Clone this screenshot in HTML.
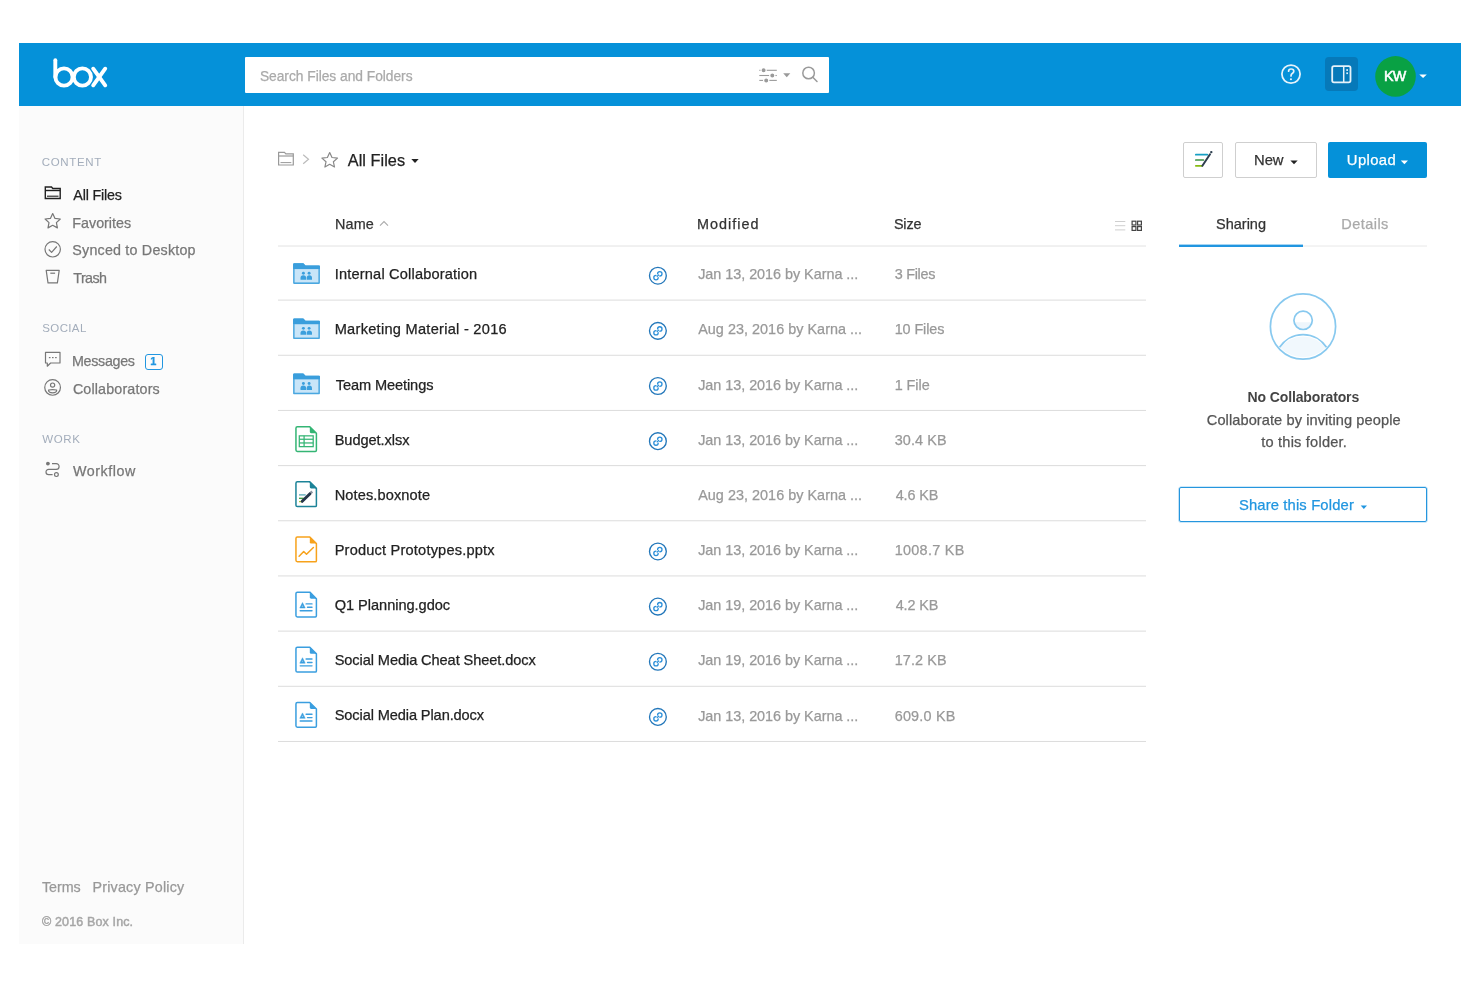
<!DOCTYPE html>
<html><head><meta charset="utf-8"><title>Box - All Files</title><style>
html,body{margin:0;padding:0;}
body{width:1480px;height:987px;position:relative;overflow:hidden;background:#fff;font-family:"Liberation Sans",sans-serif;}
.t{position:absolute;white-space:nowrap;-webkit-text-stroke:0.25px currentColor;}
.b{position:absolute;box-sizing:content-box;}
</style></head><body><div style="position:absolute;left:0;top:0;width:1480px;height:987px;filter:blur(0.35px);">
<div class="b" style="left:19px;top:106px;width:1442px;height:838px;background:#fff;"></div>
<div class="b" style="left:19px;top:43px;width:1442px;height:63px;background:#0591d9;"></div>
<div class="b" style="left:19px;top:106px;width:224px;height:838px;background:#fbfbfb;border-right:1px solid #ebebeb;"></div>
<div class="b" style="left:245px;top:57px;width:584px;height:36px;background:#fff;border-radius:1px;"></div>
<div class="b" style="left:1325px;top:57px;width:33px;height:34px;background:#0679b9;border-radius:4px;"></div>
<div class="b" style="left:1183px;top:142px;width:38px;height:34px;border:1px solid #cfcfcf;border-radius:2px;background:#fff;"></div>
<div class="b" style="left:1235px;top:142px;width:80px;height:34px;border:1px solid #cfcfcf;border-radius:2px;background:#fff;"></div>
<div class="b" style="left:1328px;top:142px;width:99px;height:36px;background:#0591d9;border-radius:2px;"></div>
<div class="b" style="left:1179px;top:487px;width:246px;height:33px;border:1px solid #2596de;border-radius:2px;box-shadow:0 0 0 0.6px rgba(37,150,222,0.45);"></div>
<div class="b" style="left:145px;top:353.5px;width:15.5px;height:14.5px;border:1.4px solid #2196e0;border-radius:3px;"></div>
<svg class="b" style="left:0;top:0" width="1480" height="987"><g fill="none" stroke="#fff" stroke-width="3.9" stroke-linecap="round">
<line x1="55.3" y1="60.2" x2="55.3" y2="77"/>
<circle cx="64" cy="77" r="8.6"/>
<circle cx="82.4" cy="77" r="8.6"/>
<line x1="93.2" y1="68.7" x2="105.2" y2="85.3"/>
<line x1="105.2" y1="68.7" x2="93.2" y2="85.3"/>
</g>
<g stroke="#9a9a9a" stroke-width="1.1" fill="none">
<line x1="759.3" y1="70.3" x2="776.8" y2="70.3"/><line x1="759.3" y1="75.5" x2="776.8" y2="75.5"/><line x1="759.3" y1="80.4" x2="776.8" y2="80.4"/>
</g>
<g fill="#9a9a9a" stroke="#fff" stroke-width="1.2"><circle cx="763.6" cy="70.3" r="2.6"/><circle cx="772.3" cy="75.5" r="2.6"/><circle cx="766.2" cy="80.4" r="2.6"/></g><g fill="#9a9a9a">
<path d="M783.2 73.3 L790.3 73.3 L786.75 77.2 Z"/></g>
<g fill="none" stroke="#9a9a9a" stroke-width="1.5"><circle cx="808.6" cy="73" r="5.8"/><line x1="812.8" y1="77.3" x2="817" y2="81.5" stroke-linecap="round"/></g>
<circle cx="1291" cy="74.1" r="9.1" fill="none" stroke="#e6f3fb" stroke-width="1.75"/>
<path d="M1288.6 71.2 Q1288.6 69 1291.1 69 Q1293.8 69 1293.8 71.2 Q1293.8 72.7 1292.2 73.5 Q1291 74.2 1291 75.9" fill="none" stroke="#e6f3fb" stroke-width="1.7" stroke-linecap="round"/>
<circle cx="1290.95" cy="79.2" r="1.05" fill="#e6f3fb"/>
<rect x="1332.2" y="66.2" width="18.3" height="16.1" rx="1.8" fill="none" stroke="#e6f2fa" stroke-width="1.8"/>
<line x1="1343.7" y1="66" x2="1343.7" y2="82.5" stroke="#e6f2fa" stroke-width="1.5"/>
<rect x="1346.3" y="69.2" width="1.7" height="1.7" fill="#e6f2fa"/><rect x="1346.3" y="72.4" width="1.7" height="1.7" fill="#e6f2fa"/>
<circle cx="1395.5" cy="76.4" r="20.3" fill="#09a144"/>
<path d="M1419.3 74.4 L1426.8 74.4 L1423.05 78.1 Z" fill="#fff"/>
<g fill="none" stroke="#222" stroke-width="1.4">
<path d="M45.3 187 H51.5 L52.8 188.5 H60.2 V198.5 H45.3 Z"/><line x1="45.3" y1="190.5" x2="60.2" y2="190.5"/><line x1="47" y1="196.2" x2="58.5" y2="196.2" stroke-width="1.1"/>
</g>
<g fill="none" stroke="#777" stroke-width="1.2" stroke-linejoin="round">
<path d="M52.7 213.5 L55 218.4 L60.3 219 L56.4 222.6 L57.4 227.9 L52.7 225.3 L48 227.9 L49 222.6 L45.1 219 L50.4 218.4 Z"/>
<circle cx="52.7" cy="249.3" r="7.7"/><path d="M48.8 249.5 L51.6 252.3 L56.8 246.5"/>
<path d="M46.2 270.3 H59.2 L57.4 282.9 H48 Z"/><line x1="50.3" y1="273.2" x2="55.1" y2="273.2"/>
<path d="M45.5 352.3 H60 V363 H50.6 L47.3 366.2 V363 H45.5 Z"/>
<circle cx="52.6" cy="387.4" r="7.85"/><circle cx="52.6" cy="385.1" r="2.1"/><path d="M48.5 390 Q52.6 389.2 56.7 390 Q56.7 392.8 52.6 392.8 Q48.5 392.8 48.5 390 Z"/>
<circle cx="56.4" cy="474.6" r="1.9"/><path d="M52 463.6 H56.2 A2.9 2.9 0 0 1 56.2 469.4 H48.6 A2.6 2.6 0 0 0 48.6 474.6 H52.6"/>
</g>
<circle cx="47.9" cy="463.6" r="1.9" fill="#777"/>
<g fill="#777"><rect x="48.9" y="357" width="1.6" height="1.2"/><rect x="52" y="357" width="1.6" height="1.2"/><rect x="55.1" y="357" width="1.6" height="1.2"/></g>
<g fill="none" stroke="#999" stroke-width="1.2">
<path d="M278.6 152.4 H284.5 L285.8 153.8 H293.3 V165 H278.6 Z"/><line x1="278.6" y1="156" x2="293.3" y2="156"/><line x1="280.5" y1="162.6" x2="291.3" y2="162.6" stroke-width="1"/>
</g>
<path d="M303.2 154.8 L308.5 159.3 L303.2 163.8" fill="none" stroke="#bbb" stroke-width="1.2"/>
<path d="M329.7 152.5 L332 157.5 L337.5 158.1 L333.4 161.8 L334.5 167 L329.7 164.3 L324.9 167 L326 161.8 L321.9 158.1 L327.4 157.5 Z" fill="none" stroke="#888" stroke-width="1.2" stroke-linejoin="round"/>
<path d="M411.3 159 L418.7 159 L415 163 Z" fill="#222"/>
<path d="M1290.4 160.5 L1297.7 160.5 L1294 164.3 Z" fill="#222"/>
<path d="M1400.8 160.5 L1408 160.5 L1404.4 164.3 Z" fill="#fff"/>
<line x1="1195.8" y1="154.7" x2="1207.3" y2="154.7" stroke="#16a0c4" stroke-width="1.7" stroke-linecap="round"/>
<line x1="1195.8" y1="160" x2="1203.4" y2="160" stroke="#3d9142" stroke-width="1.7" stroke-linecap="round"/>
<line x1="1195.8" y1="165.8" x2="1202" y2="165.8" stroke="#86bc12" stroke-width="1.7" stroke-linecap="round"/>
<line x1="1202.4" y1="165.8" x2="1210" y2="154.3" stroke="#2d3e4e" stroke-width="2" stroke-linecap="round"/>
<circle cx="1211.3" cy="152.1" r="1.2" fill="#2d3e4e"/>
<path d="M380 225.7 L384 221.6 L388 225.7" fill="none" stroke="#aaa" stroke-width="1.1"/>
<g stroke="#cfcfcf" stroke-width="1"><line x1="1115" y1="221.5" x2="1125.3" y2="221.5"/><line x1="1115" y1="225.7" x2="1125.3" y2="225.7"/><line x1="1115" y1="229.9" x2="1125.3" y2="229.9"/></g>
<g fill="none" stroke="#444" stroke-width="1.2"><rect x="1132.1" y="221.2" width="3.8" height="3.8"/><rect x="1137.6" y="221.2" width="3.8" height="3.8"/><rect x="1132.1" y="226.6" width="3.8" height="3.8"/><rect x="1137.6" y="226.6" width="3.8" height="3.8"/></g>
<line x1="278" y1="246" x2="1146" y2="246" stroke="#e2e2e2" stroke-width="1"/>
<line x1="278" y1="300.10" x2="1146" y2="300.10" stroke="#dcdcdc" stroke-width="1"/>
<g transform="translate(292.3,263.30)">
<path d="M0.8 1.2 Q0.8 0 2 0 H11 L13.2 2.2 H26.8 Q27.6 2.2 27.6 3 V19.8 Q27.6 20.6 26.8 20.6 H1.6 Q0.8 20.6 0.8 19.8 Z" fill="#4aa7e0"/>
<path d="M0.8 1.2 Q0.8 0 2 0 H11 L13.2 2.2 H26.8 Q27.6 2.2 27.6 3 V5.6 H0.8 Z" fill="#3a9edc"/>
<rect x="2.3" y="5.8" width="23.8" height="13.3" fill="#c9e5f8"/>
<circle cx="11.1" cy="9.9" r="1.45" fill="#3b9fdd"/><circle cx="16.8" cy="9.9" r="1.45" fill="#3b9fdd"/>
<path d="M8.2 16.4 V14.6 Q8.2 12 11 12 Q13.8 12 13.8 14.6 V16.4 Z" fill="#3b9fdd"/><path d="M14.4 16.4 V14.6 Q14.4 12 17 12 Q19.7 12 19.7 14.6 V16.4 Z" fill="#3b9fdd"/>
</g>
<g transform="translate(657.9,275.70)"><circle r="8.4" fill="none" stroke="#2377ba" stroke-width="1.35"/><g fill="none" stroke="#2b8fd9" stroke-width="1.3" stroke-linecap="round"><path d="M-0.3 -1.9 A2.2 2.2 0 1 1 1.9 0.3"/><path d="M0.3 1.9 A2.2 2.2 0 1 1 -1.9 -0.3"/><line x1="-0.7" y1="0.7" x2="0.7" y2="-0.7"/></g></g>
<line x1="278" y1="355.27" x2="1146" y2="355.27" stroke="#dcdcdc" stroke-width="1"/>
<g transform="translate(292.3,318.45)">
<path d="M0.8 1.2 Q0.8 0 2 0 H11 L13.2 2.2 H26.8 Q27.6 2.2 27.6 3 V19.8 Q27.6 20.6 26.8 20.6 H1.6 Q0.8 20.6 0.8 19.8 Z" fill="#4aa7e0"/>
<path d="M0.8 1.2 Q0.8 0 2 0 H11 L13.2 2.2 H26.8 Q27.6 2.2 27.6 3 V5.6 H0.8 Z" fill="#3a9edc"/>
<rect x="2.3" y="5.8" width="23.8" height="13.3" fill="#c9e5f8"/>
<circle cx="11.1" cy="9.9" r="1.45" fill="#3b9fdd"/><circle cx="16.8" cy="9.9" r="1.45" fill="#3b9fdd"/>
<path d="M8.2 16.4 V14.6 Q8.2 12 11 12 Q13.8 12 13.8 14.6 V16.4 Z" fill="#3b9fdd"/><path d="M14.4 16.4 V14.6 Q14.4 12 17 12 Q19.7 12 19.7 14.6 V16.4 Z" fill="#3b9fdd"/>
</g>
<g transform="translate(657.9,330.85)"><circle r="8.4" fill="none" stroke="#2377ba" stroke-width="1.35"/><g fill="none" stroke="#2b8fd9" stroke-width="1.3" stroke-linecap="round"><path d="M-0.3 -1.9 A2.2 2.2 0 1 1 1.9 0.3"/><path d="M0.3 1.9 A2.2 2.2 0 1 1 -1.9 -0.3"/><line x1="-0.7" y1="0.7" x2="0.7" y2="-0.7"/></g></g>
<line x1="278" y1="410.44" x2="1146" y2="410.44" stroke="#dcdcdc" stroke-width="1"/>
<g transform="translate(292.3,373.60)">
<path d="M0.8 1.2 Q0.8 0 2 0 H11 L13.2 2.2 H26.8 Q27.6 2.2 27.6 3 V19.8 Q27.6 20.6 26.8 20.6 H1.6 Q0.8 20.6 0.8 19.8 Z" fill="#4aa7e0"/>
<path d="M0.8 1.2 Q0.8 0 2 0 H11 L13.2 2.2 H26.8 Q27.6 2.2 27.6 3 V5.6 H0.8 Z" fill="#3a9edc"/>
<rect x="2.3" y="5.8" width="23.8" height="13.3" fill="#c9e5f8"/>
<circle cx="11.1" cy="9.9" r="1.45" fill="#3b9fdd"/><circle cx="16.8" cy="9.9" r="1.45" fill="#3b9fdd"/>
<path d="M8.2 16.4 V14.6 Q8.2 12 11 12 Q13.8 12 13.8 14.6 V16.4 Z" fill="#3b9fdd"/><path d="M14.4 16.4 V14.6 Q14.4 12 17 12 Q19.7 12 19.7 14.6 V16.4 Z" fill="#3b9fdd"/>
</g>
<g transform="translate(657.9,386.00)"><circle r="8.4" fill="none" stroke="#2377ba" stroke-width="1.35"/><g fill="none" stroke="#2b8fd9" stroke-width="1.3" stroke-linecap="round"><path d="M-0.3 -1.9 A2.2 2.2 0 1 1 1.9 0.3"/><path d="M0.3 1.9 A2.2 2.2 0 1 1 -1.9 -0.3"/><line x1="-0.7" y1="0.7" x2="0.7" y2="-0.7"/></g></g>
<line x1="278" y1="465.61" x2="1146" y2="465.61" stroke="#dcdcdc" stroke-width="1"/>
<g transform="translate(295.2,425.95)"><path d="M0.75 2.2 Q0.75 0.75 2.2 0.75 H14.6 L21.2 7.3 V24.4 Q21.2 25.5 20.1 25.5 H2.2 Q0.75 25.5 0.75 24.1 Z" fill="#fff" stroke="#34b574" stroke-width="1.5" stroke-linejoin="round"/><path d="M14.6 0.75 L21.2 7.3 H16 Q14.6 7.3 14.6 5.9 Z" fill="#34b574"/><g fill="none" stroke="#34b574" stroke-width="1.25"><rect x="4.1" y="9.9" width="13.9" height="10.8"/><line x1="4.1" y1="13.3" x2="18" y2="13.3"/><line x1="4.1" y1="17" x2="18" y2="17"/><line x1="8.9" y1="9.9" x2="8.9" y2="20.7"/></g></g>
<g transform="translate(657.9,441.15)"><circle r="8.4" fill="none" stroke="#2377ba" stroke-width="1.35"/><g fill="none" stroke="#2b8fd9" stroke-width="1.3" stroke-linecap="round"><path d="M-0.3 -1.9 A2.2 2.2 0 1 1 1.9 0.3"/><path d="M0.3 1.9 A2.2 2.2 0 1 1 -1.9 -0.3"/><line x1="-0.7" y1="0.7" x2="0.7" y2="-0.7"/></g></g>
<line x1="278" y1="520.78" x2="1146" y2="520.78" stroke="#dcdcdc" stroke-width="1"/>
<g transform="translate(295.2,481.10)"><path d="M0.75 2.2 Q0.75 0.75 2.2 0.75 H14.6 L21.2 7.3 V24.4 Q21.2 25.5 20.1 25.5 H2.2 Q0.75 25.5 0.75 24.1 Z" fill="#fff" stroke="#1c8398" stroke-width="1.5" stroke-linejoin="round"/><path d="M14.6 0.75 L21.2 7.3 H16 Q14.6 7.3 14.6 5.9 Z" fill="#1c8398"/><line x1="3.8" y1="13.8" x2="10.5" y2="13.8" stroke="#5aa9b8" stroke-width="1.3"/><line x1="3.8" y1="17.2" x2="8.5" y2="17.2" stroke="#3c9a3c" stroke-width="1.3"/><line x1="3.8" y1="20.5" x2="6.5" y2="20.5" stroke="#a9c93c" stroke-width="1.3"/><line x1="7" y1="20.2" x2="14.8" y2="12.6" stroke="#26364a" stroke-width="3" stroke-linecap="round"/><line x1="15.6" y1="11.8" x2="17" y2="10.4" stroke="#8a93a0" stroke-width="2.6"/></g>
<line x1="278" y1="575.95" x2="1146" y2="575.95" stroke="#dcdcdc" stroke-width="1"/>
<g transform="translate(295.2,536.25)"><path d="M0.75 2.2 Q0.75 0.75 2.2 0.75 H14.6 L21.2 7.3 V24.4 Q21.2 25.5 20.1 25.5 H2.2 Q0.75 25.5 0.75 24.1 Z" fill="#fff" stroke="#f7a21b" stroke-width="1.5" stroke-linejoin="round"/><path d="M14.6 0.75 L21.2 7.3 H16 Q14.6 7.3 14.6 5.9 Z" fill="#f7a21b"/><path d="M3.9 19.9 L8.5 15.2 L11.3 18 L18.2 11.3" fill="none" stroke="#f7a21b" stroke-width="1.5" stroke-linecap="round" stroke-linejoin="round"/></g>
<g transform="translate(657.9,551.45)"><circle r="8.4" fill="none" stroke="#2377ba" stroke-width="1.35"/><g fill="none" stroke="#2b8fd9" stroke-width="1.3" stroke-linecap="round"><path d="M-0.3 -1.9 A2.2 2.2 0 1 1 1.9 0.3"/><path d="M0.3 1.9 A2.2 2.2 0 1 1 -1.9 -0.3"/><line x1="-0.7" y1="0.7" x2="0.7" y2="-0.7"/></g></g>
<line x1="278" y1="631.12" x2="1146" y2="631.12" stroke="#dcdcdc" stroke-width="1"/>
<g transform="translate(295.2,591.40)"><path d="M0.75 2.2 Q0.75 0.75 2.2 0.75 H14.6 L21.2 7.3 V24.4 Q21.2 25.5 20.1 25.5 H2.2 Q0.75 25.5 0.75 24.1 Z" fill="#fff" stroke="#3a9edf" stroke-width="1.5" stroke-linejoin="round"/><path d="M14.6 0.75 L21.2 7.3 H16 Q14.6 7.3 14.6 5.9 Z" fill="#3a9edf"/><path d="M4.6 16.6 L7.3 11.2 L10 16.6 Z M6.5 15.3 H8.1 L7.3 13.6 Z" fill="#3a9edf" fill-rule="evenodd" stroke="#3a9edf" stroke-width="0.5" stroke-linejoin="round"/><g stroke="#3a9edf" stroke-width="1.4" stroke-linecap="round"><line x1="10.9" y1="12.5" x2="16.8" y2="12.5"/><line x1="12.3" y1="15.9" x2="16.8" y2="15.9"/><line x1="5" y1="19.3" x2="16.8" y2="19.3"/></g></g>
<g transform="translate(657.9,606.60)"><circle r="8.4" fill="none" stroke="#2377ba" stroke-width="1.35"/><g fill="none" stroke="#2b8fd9" stroke-width="1.3" stroke-linecap="round"><path d="M-0.3 -1.9 A2.2 2.2 0 1 1 1.9 0.3"/><path d="M0.3 1.9 A2.2 2.2 0 1 1 -1.9 -0.3"/><line x1="-0.7" y1="0.7" x2="0.7" y2="-0.7"/></g></g>
<line x1="278" y1="686.29" x2="1146" y2="686.29" stroke="#dcdcdc" stroke-width="1"/>
<g transform="translate(295.2,646.55)"><path d="M0.75 2.2 Q0.75 0.75 2.2 0.75 H14.6 L21.2 7.3 V24.4 Q21.2 25.5 20.1 25.5 H2.2 Q0.75 25.5 0.75 24.1 Z" fill="#fff" stroke="#3a9edf" stroke-width="1.5" stroke-linejoin="round"/><path d="M14.6 0.75 L21.2 7.3 H16 Q14.6 7.3 14.6 5.9 Z" fill="#3a9edf"/><path d="M4.6 16.6 L7.3 11.2 L10 16.6 Z M6.5 15.3 H8.1 L7.3 13.6 Z" fill="#3a9edf" fill-rule="evenodd" stroke="#3a9edf" stroke-width="0.5" stroke-linejoin="round"/><g stroke="#3a9edf" stroke-width="1.4" stroke-linecap="round"><line x1="10.9" y1="12.5" x2="16.8" y2="12.5"/><line x1="12.3" y1="15.9" x2="16.8" y2="15.9"/><line x1="5" y1="19.3" x2="16.8" y2="19.3"/></g></g>
<g transform="translate(657.9,661.75)"><circle r="8.4" fill="none" stroke="#2377ba" stroke-width="1.35"/><g fill="none" stroke="#2b8fd9" stroke-width="1.3" stroke-linecap="round"><path d="M-0.3 -1.9 A2.2 2.2 0 1 1 1.9 0.3"/><path d="M0.3 1.9 A2.2 2.2 0 1 1 -1.9 -0.3"/><line x1="-0.7" y1="0.7" x2="0.7" y2="-0.7"/></g></g>
<line x1="278" y1="741.46" x2="1146" y2="741.46" stroke="#dcdcdc" stroke-width="1"/>
<g transform="translate(295.2,701.70)"><path d="M0.75 2.2 Q0.75 0.75 2.2 0.75 H14.6 L21.2 7.3 V24.4 Q21.2 25.5 20.1 25.5 H2.2 Q0.75 25.5 0.75 24.1 Z" fill="#fff" stroke="#3a9edf" stroke-width="1.5" stroke-linejoin="round"/><path d="M14.6 0.75 L21.2 7.3 H16 Q14.6 7.3 14.6 5.9 Z" fill="#3a9edf"/><path d="M4.6 16.6 L7.3 11.2 L10 16.6 Z M6.5 15.3 H8.1 L7.3 13.6 Z" fill="#3a9edf" fill-rule="evenodd" stroke="#3a9edf" stroke-width="0.5" stroke-linejoin="round"/><g stroke="#3a9edf" stroke-width="1.4" stroke-linecap="round"><line x1="10.9" y1="12.5" x2="16.8" y2="12.5"/><line x1="12.3" y1="15.9" x2="16.8" y2="15.9"/><line x1="5" y1="19.3" x2="16.8" y2="19.3"/></g></g>
<g transform="translate(657.9,716.90)"><circle r="8.4" fill="none" stroke="#2377ba" stroke-width="1.35"/><g fill="none" stroke="#2b8fd9" stroke-width="1.3" stroke-linecap="round"><path d="M-0.3 -1.9 A2.2 2.2 0 1 1 1.9 0.3"/><path d="M0.3 1.9 A2.2 2.2 0 1 1 -1.9 -0.3"/><line x1="-0.7" y1="0.7" x2="0.7" y2="-0.7"/></g></g>
<line x1="1179" y1="246" x2="1427" y2="246" stroke="#e8e8e8" stroke-width="1"/>
<rect x="1179" y="244.6" width="124" height="2.4" fill="#2196e0"/>
<circle cx="1303" cy="326.5" r="32.6" fill="none" stroke="#88c9ef" stroke-width="1.7"/>
<path d="M1280.5 347.8 A28 28 0 0 1 1325.5 347.8 A31.5 31.5 0 0 1 1280.5 347.8 Z" fill="#f1f8fd"/>
<path d="M1279.6 347.3 A28 28 0 0 1 1326.5 347.3" fill="none" stroke="#88c9ef" stroke-width="1.7"/>
<path d="M1294.3 322.3 A9.2 9.2 0 0 0 1311.9 322.3 Z" fill="#eef6fc"/>
<circle cx="1303.1" cy="320.3" r="9.2" fill="none" stroke="#88c9ef" stroke-width="1.7"/>
<path d="M1360.7 505.5 L1367 505.5 L1363.85 509 Z" fill="#2196e0"/></svg>
<div class="t" style="left:259.90px;top:67.52px;font-size:13.8px;line-height:17px;letter-spacing:-0.03px;color:#aaa;">Search Files and Folders</div>
<div class="t" style="left:1384.10px;top:67.05px;font-size:14.3px;line-height:18px;letter-spacing:-0.80px;color:#fff;-webkit-text-stroke:0.55px currentColor;">KW</div>
<div class="t" style="left:41.70px;top:154.62px;font-size:11.5px;line-height:14px;letter-spacing:0.67px;color:#a3adbb;-webkit-text-stroke:0;">CONTENT</div>
<div class="t" style="left:73.30px;top:185.65px;font-size:14.3px;line-height:18px;letter-spacing:-0.17px;color:#222;">All Files</div>
<div class="t" style="left:72.30px;top:213.55px;font-size:14.3px;line-height:18px;letter-spacing:0.00px;color:#777;">Favorites</div>
<div class="t" style="left:72.30px;top:241.45px;font-size:14.3px;line-height:18px;letter-spacing:0.20px;color:#777;">Synced to Desktop</div>
<div class="t" style="left:73.30px;top:269.45px;font-size:14.3px;line-height:18px;letter-spacing:-0.60px;color:#777;">Trash</div>
<div class="t" style="left:42.30px;top:321.42px;font-size:11.5px;line-height:14px;letter-spacing:0.36px;color:#a3adbb;-webkit-text-stroke:0;">SOCIAL</div>
<div class="t" style="left:71.90px;top:351.85px;font-size:14.3px;line-height:18px;letter-spacing:-0.29px;color:#777;">Messages</div>
<div class="t" style="left:72.90px;top:380.25px;font-size:14.3px;line-height:18px;letter-spacing:0.15px;color:#777;">Collaborators</div>
<div class="t" style="left:42.30px;top:431.82px;font-size:11.5px;line-height:14px;letter-spacing:0.60px;color:#a3adbb;-webkit-text-stroke:0;">WORK</div>
<div class="t" style="left:72.90px;top:462.35px;font-size:14.3px;line-height:18px;letter-spacing:0.57px;color:#777;">Workflow</div>
<div class="t" style="left:42.00px;top:878.35px;font-size:14.3px;line-height:18px;letter-spacing:-0.05px;color:#999;">Terms</div>
<div class="t" style="left:92.40px;top:878.35px;font-size:14.3px;line-height:18px;letter-spacing:0.22px;color:#999;">Privacy Policy</div>
<div class="t" style="left:42.00px;top:913.87px;font-size:12.5px;line-height:16px;letter-spacing:0.14px;color:#a6a6a6;-webkit-text-stroke:0.45px currentColor;">© 2016 Box Inc.</div>
<div class="t" style="left:347.80px;top:149.65px;font-size:16.3px;line-height:20px;letter-spacing:0.03px;color:#222;">All Files</div>
<div class="t" style="left:1254.10px;top:151.47px;font-size:14.8px;line-height:18px;letter-spacing:-0.10px;color:#333;">New</div>
<div class="t" style="left:1346.80px;top:151.47px;font-size:14.8px;line-height:18px;letter-spacing:0.40px;color:#fff;">Upload</div>
<div class="t" style="left:335.10px;top:214.61px;font-size:14.4px;line-height:18px;letter-spacing:0.07px;color:#333;">Name</div>
<div class="t" style="left:697.00px;top:214.61px;font-size:14.4px;line-height:18px;letter-spacing:1.03px;color:#333;">Modified</div>
<div class="t" style="left:893.90px;top:214.61px;font-size:14.4px;line-height:18px;letter-spacing:-0.13px;color:#333;">Size</div>
<div class="t" style="left:1216.00px;top:214.68px;font-size:14.5px;line-height:18px;letter-spacing:0.00px;color:#333;">Sharing</div>
<div class="t" style="left:1341.20px;top:214.68px;font-size:14.5px;line-height:18px;letter-spacing:0.47px;color:#aaa;">Details</div>
<div class="t" style="left:1247.60px;top:387.95px;font-size:14.0px;line-height:18px;font-weight:bold;-webkit-text-stroke:0;letter-spacing:-0.13px;color:#444;">No Collaborators</div>
<div class="t" style="left:1206.80px;top:410.54px;font-size:14.6px;line-height:18px;letter-spacing:0.08px;color:#555;">Collaborate by inviting people</div>
<div class="t" style="left:1261.20px;top:432.84px;font-size:14.6px;line-height:18px;letter-spacing:0.21px;color:#555;">to this folder.</div>
<div class="t" style="left:1238.90px;top:495.57px;font-size:14.8px;line-height:18px;letter-spacing:0.14px;color:#2196e0;">Share this Folder</div>
<div class="t" style="left:334.70px;top:265.24px;font-size:14.6px;line-height:18px;letter-spacing:0.18px;color:#222;">Internal Collaboration</div>
<div class="t" style="left:698.20px;top:265.31px;font-size:14.4px;line-height:18px;letter-spacing:-0.03px;color:#999;">Jan 13, 2016 by Karna ...</div>
<div class="t" style="left:894.70px;top:265.31px;font-size:14.4px;line-height:18px;letter-spacing:-0.27px;color:#999;">3 Files</div>
<div class="t" style="left:334.70px;top:320.39px;font-size:14.6px;line-height:18px;letter-spacing:0.27px;color:#222;">Marketing Material - 2016</div>
<div class="t" style="left:698.20px;top:320.46px;font-size:14.4px;line-height:18px;letter-spacing:0.03px;color:#999;">Aug 23, 2016 by Karna ...</div>
<div class="t" style="left:894.70px;top:320.46px;font-size:14.4px;line-height:18px;letter-spacing:-0.09px;color:#999;">10 Files</div>
<div class="t" style="left:335.70px;top:375.54px;font-size:14.6px;line-height:18px;letter-spacing:-0.10px;color:#222;">Team Meetings</div>
<div class="t" style="left:698.20px;top:375.61px;font-size:14.4px;line-height:18px;letter-spacing:-0.03px;color:#999;">Jan 13, 2016 by Karna ...</div>
<div class="t" style="left:894.70px;top:375.61px;font-size:14.4px;line-height:18px;letter-spacing:-0.04px;color:#999;">1 File</div>
<div class="t" style="left:334.70px;top:430.69px;font-size:14.6px;line-height:18px;letter-spacing:-0.06px;color:#222;">Budget.xlsx</div>
<div class="t" style="left:698.20px;top:430.76px;font-size:14.4px;line-height:18px;letter-spacing:-0.03px;color:#999;">Jan 13, 2016 by Karna ...</div>
<div class="t" style="left:894.70px;top:430.76px;font-size:14.4px;line-height:18px;letter-spacing:0.13px;color:#999;">30.4 KB</div>
<div class="t" style="left:334.70px;top:485.84px;font-size:14.6px;line-height:18px;letter-spacing:0.10px;color:#222;">Notes.boxnote</div>
<div class="t" style="left:698.20px;top:485.91px;font-size:14.4px;line-height:18px;letter-spacing:0.03px;color:#999;">Aug 23, 2016 by Karna ...</div>
<div class="t" style="left:895.70px;top:485.91px;font-size:14.4px;line-height:18px;letter-spacing:-0.12px;color:#999;">4.6 KB</div>
<div class="t" style="left:334.70px;top:540.99px;font-size:14.6px;line-height:18px;letter-spacing:0.19px;color:#222;">Product Prototypes.pptx</div>
<div class="t" style="left:698.20px;top:541.06px;font-size:14.4px;line-height:18px;letter-spacing:-0.03px;color:#999;">Jan 13, 2016 by Karna ...</div>
<div class="t" style="left:894.70px;top:541.06px;font-size:14.4px;line-height:18px;letter-spacing:0.30px;color:#999;">1008.7 KB</div>
<div class="t" style="left:334.70px;top:596.14px;font-size:14.6px;line-height:18px;letter-spacing:-0.04px;color:#222;">Q1 Planning.gdoc</div>
<div class="t" style="left:698.20px;top:596.21px;font-size:14.4px;line-height:18px;letter-spacing:-0.03px;color:#999;">Jan 19, 2016 by Karna ...</div>
<div class="t" style="left:895.70px;top:596.21px;font-size:14.4px;line-height:18px;letter-spacing:-0.12px;color:#999;">4.2 KB</div>
<div class="t" style="left:334.70px;top:651.29px;font-size:14.6px;line-height:18px;letter-spacing:-0.09px;color:#222;">Social Media Cheat Sheet.docx</div>
<div class="t" style="left:698.20px;top:651.36px;font-size:14.4px;line-height:18px;letter-spacing:-0.03px;color:#999;">Jan 19, 2016 by Karna ...</div>
<div class="t" style="left:894.70px;top:651.36px;font-size:14.4px;line-height:18px;letter-spacing:0.13px;color:#999;">17.2 KB</div>
<div class="t" style="left:334.70px;top:706.44px;font-size:14.6px;line-height:18px;letter-spacing:-0.11px;color:#222;">Social Media Plan.docx</div>
<div class="t" style="left:698.20px;top:706.51px;font-size:14.4px;line-height:18px;letter-spacing:-0.03px;color:#999;">Jan 13, 2016 by Karna ...</div>
<div class="t" style="left:894.70px;top:706.51px;font-size:14.4px;line-height:18px;letter-spacing:0.20px;color:#999;">609.0 KB</div>
<div class="t" style="left:150.3px;top:353.5px;font-size:11px;line-height:15px;font-weight:bold;color:#2196e0;">1</div>
</div></body></html>
